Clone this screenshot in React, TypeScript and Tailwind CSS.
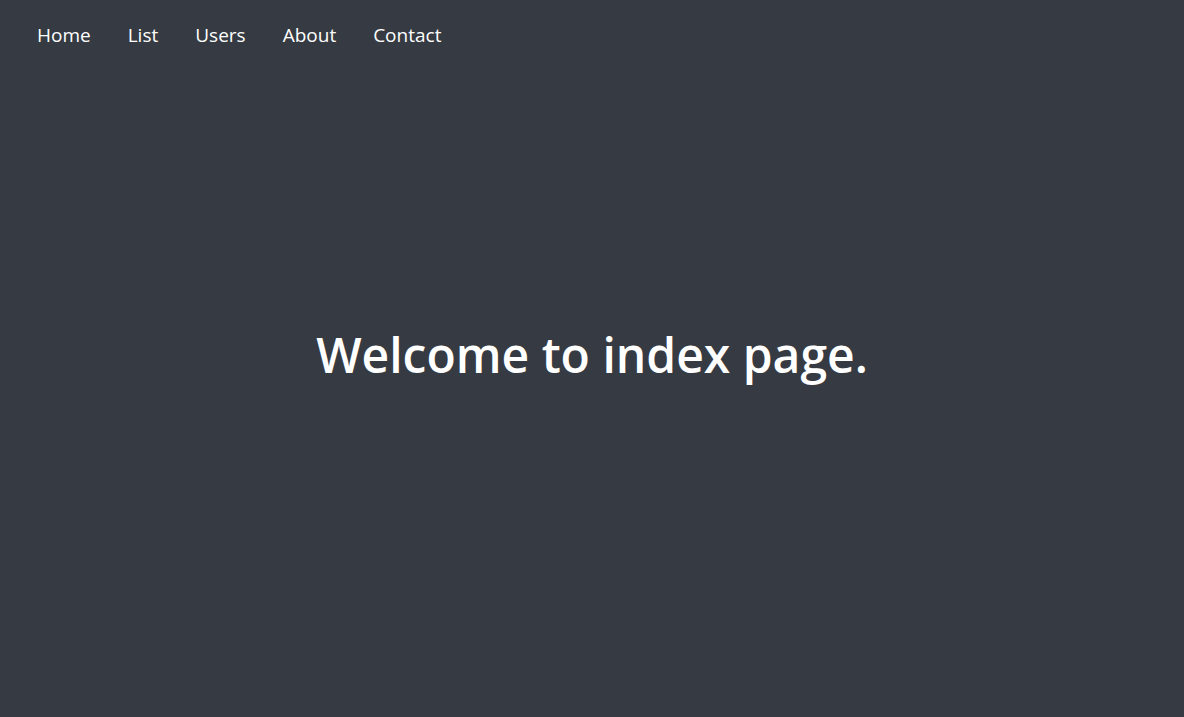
const LINKS = ['Home', 'List', 'Users', 'About', 'Contact'];

export default function App() {
  return (
    <div
      className="flex min-h-screen flex-col bg-[#363a42] text-white"
      style={{ fontFamily: '"Open Sans", "Noto Sans", sans-serif' }}
    >
      <nav className="flex h-[70px] items-center gap-[37px] px-[37px]">
        {LINKS.map((l) => (
          <a key={l} href="#" className="text-[19px] leading-none text-white">
            {l}
          </a>
        ))}
      </nav>
      <main className="flex flex-1 items-center justify-center pb-[78px]">
        <h1 className="text-[48px] font-semibold">Welcome to index page.</h1>
      </main>
    </div>
  );
}
